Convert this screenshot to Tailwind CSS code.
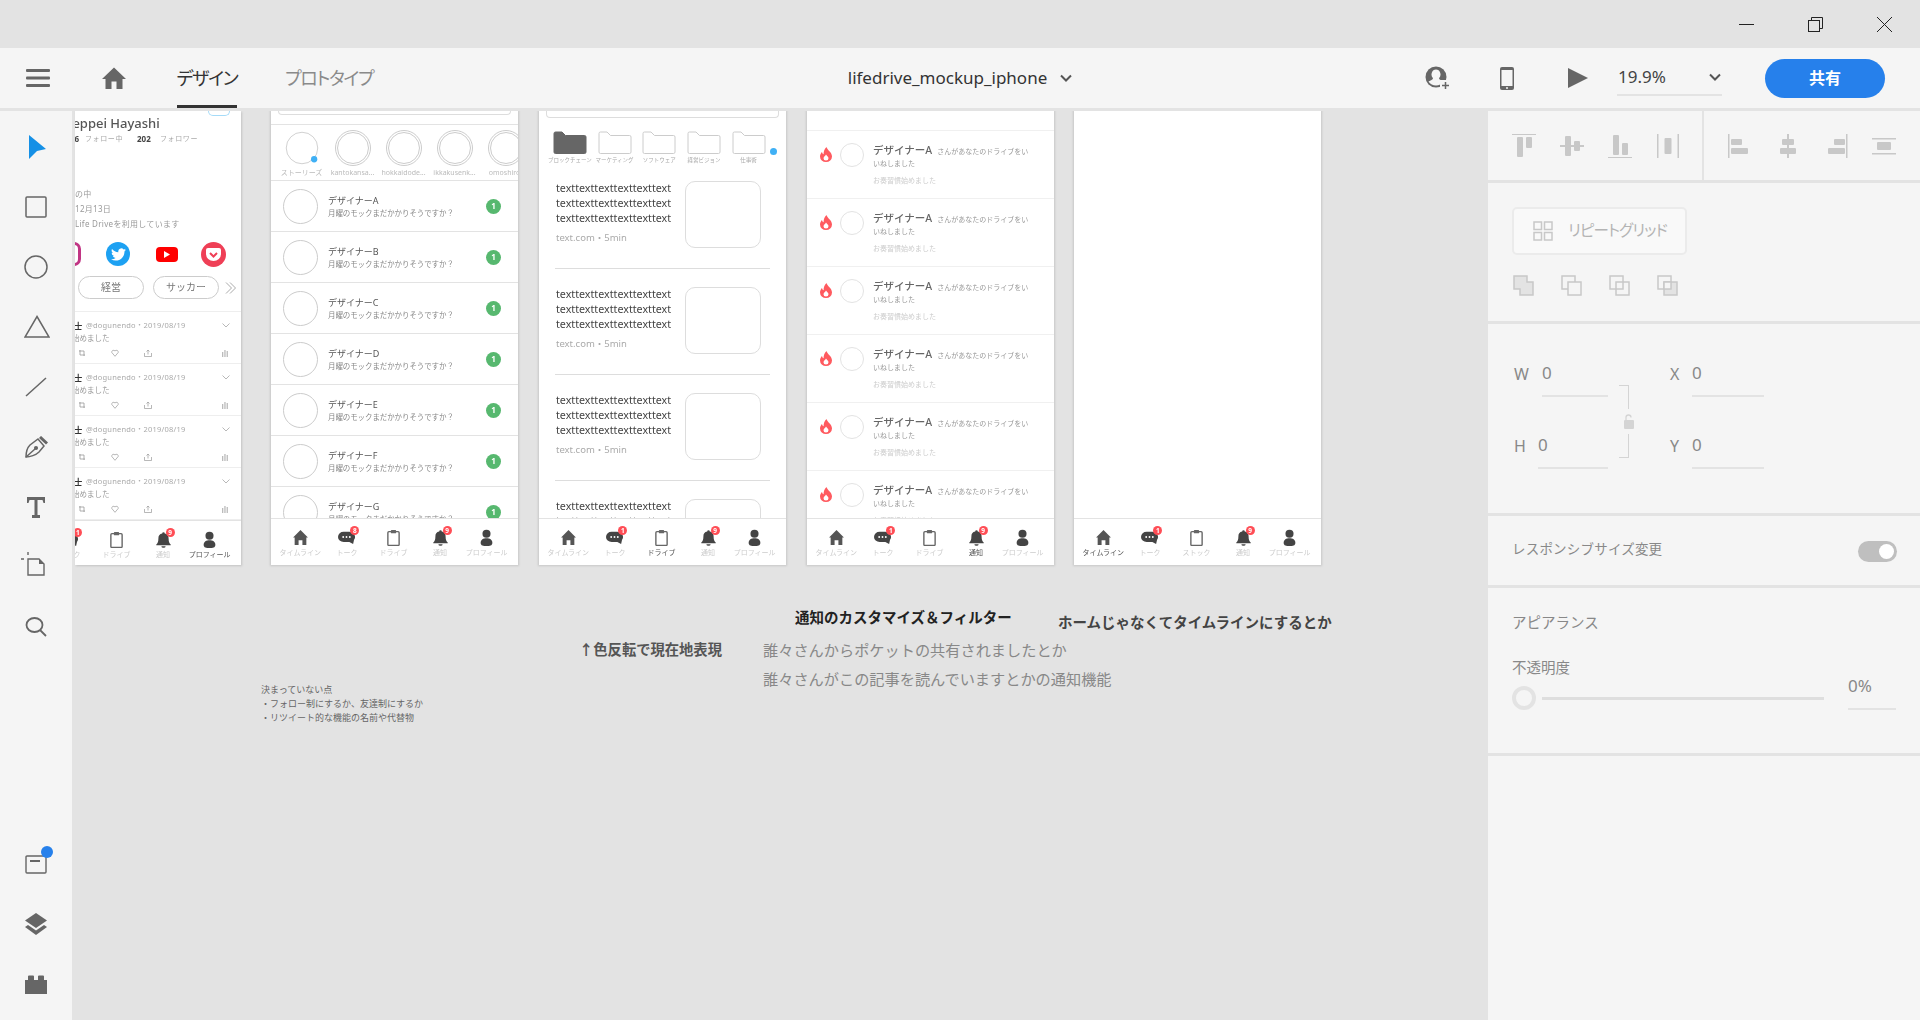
<!DOCTYPE html>
<html lang="ja">
<head>
<meta charset="UTF-8">
<title>lifedrive_mockup_iphone</title>
<script src="https://cdn.jsdelivr.net/npm/@tailwindcss/browser@4"></script>
</head>
<body class="w-[1920px] h-[1020px] overflow-hidden flex flex-col bg-[#e3e3e3] text-[#555] font-['Noto_Sans','Noto_Sans_CJK_JP',sans-serif]">

<!-- shared nav icons -->
<svg class="hidden">
  <symbol id="i-home" viewBox="0 0 16 16"><path fill="#555" d="M8 1 15 8 13.500 8 13.500 15 9.800 15 9.800 10.500 6.200 10.500 6.200 15 2.500 15 2.500 8 1 8Z"/></symbol>
  <symbol id="i-talk" viewBox="0 0 18 16"><path fill="#444" d="M6 2h6a6 5.500 0 0 1 5 8.500L16 15l-4-2.200H6A6 5.400 0 0 1 6 2Z"/><circle cx="5.500" cy="7.500" r="1" fill="#fff"/><circle cx="9" cy="7.500" r="1" fill="#fff"/><circle cx="12.500" cy="7.500" r="1" fill="#fff"/></symbol>
  <symbol id="i-clip" viewBox="0 0 16 16"><rect x="2.700" y="2.500" width="10.600" height="13" rx="1" fill="#fff" stroke="#666" stroke-width="1.300"/><rect x="5.500" y="1" width="5" height="3" rx=".8" fill="#666"/></symbol>
  <symbol id="i-bell" viewBox="0 0 16 16"><path fill="#444" d="M8 1.200a1.200 1.200 0 0 1 1.200 1.200A4.500 4.500 0 0 1 12.800 7c0 3.500 1 4.800 2 5.800v.7H1.200v-.7c1-1 2-2.300 2-5.800a4.500 4.500 0 0 1 3.600-4.600A1.200 1.200 0 0 1 8 1.200Z"/><path fill="#444" d="M6 14.300h4a2 1.500 0 0 1-4 0Z"/></symbol>
  <symbol id="i-user" viewBox="0 0 16 16"><circle cx="8" cy="4.500" r="3.800" fill="#444"/><path fill="#444" d="M2.500 13c0-3 2.500-4.300 5.500-4.300S13.500 10 13.500 13s-2.500 3-5.500 3-5.500 0-5.500-3Z"/></symbol>
  <symbol id="i-flame" viewBox="0 0 12 15"><path fill="#ff5a5f" d="M6.500 0C7 3 12 5 12 9.500a6 5.500 0 0 1-12 0C0 7.500 1 6 2 5c.2 1.300.8 2 1.600 2.200C3.500 4.500 4.500 2 6.500 0Z"/><path fill="#fff" d="M6 7.500c.4 1.200 2.500 2 2.500 3.800a2.500 2.300 0 0 1-5 0C3.500 9.500 5.500 9 6 7.500Z"/></symbol>
  <symbol id="i-folder" viewBox="0 0 34 23"><path d="M1 5V2.500A1.500 1.500 0 0 1 2.500 1h6.500l3.500 3.500h19A1.500 1.500 0 0 1 33 6v15a1.500 1.500 0 0 1-1.500 1.500h-29A1.500 1.500 0 0 1 1 21Z"/></symbol>
</svg>

<!-- title bar -->
<div class="h-12 shrink-0 flex items-center justify-end pr-[28px] gap-[54px]">
  <svg class="w-[15px] h-[15px]" viewBox="0 0 15 15"><path d="M0 7.500h15" stroke="#222" fill="none"/></svg>
  <svg class="w-[15px] h-[15px]" viewBox="0 0 15 15" fill="none" stroke="#222"><rect x=".5" y="3.500" width="11" height="11"/><path d="M3.500 3.500v-3h11v11h-3"/></svg>
  <svg class="w-[15px] h-[15px]" viewBox="0 0 15 15" fill="none" stroke="#222"><path d="M0 0l15 15M15 0 0 15"/></svg>
</div>

<!-- toolbar -->
<div class="h-[60px] shrink-0 bg-[#f5f5f5] grid grid-cols-[1fr_auto_1fr] items-center">
  <div class="flex items-center h-full">
    <svg class="ml-[26px] w-[24px] h-[18px]" viewBox="0 0 24 18" fill="#666"><rect width="24" height="3" rx="1"/><rect y="7.500" width="24" height="3" rx="1"/><rect y="15" width="24" height="3" rx="1"/></svg>
    <svg class="ml-[52px] w-[24px] h-[24px]" viewBox="0 0 24 24" fill="#666"><path d="M12 1.500 24 13h-3.500v10h-6v-7.500h-5V23h-6V13H0Z"/></svg>
    <div class="ml-[51px] h-full pt-[3px] flex items-center border-b-[3px] border-[#333] text-[#333] text-[18px] w-[60px] justify-center whitespace-nowrap [font-feature-settings:'palt'] tracking-[-1.300px]">デザイン</div>
    <div class="ml-[48px] text-[#8a8a8a] text-[18px] whitespace-nowrap [font-feature-settings:'palt'] tracking-[-1.300px]">プロトタイプ</div>
  </div>
  <div class="flex items-center text-[17px] text-[#333]">
    lifedrive_mockup_iphone
    <svg class="ml-[13px] w-[12px] h-[8px]" viewBox="0 0 12 8" fill="none" stroke="#555" stroke-width="2"><path d="M1 1.500l5 5 5-5"/></svg>
  </div>
  <div class="flex items-center justify-end pr-[35px]">
    <svg class="w-[26px] h-[24px]" viewBox="0 0 26 24"><circle cx="11" cy="11" r="10.500" fill="#666"/><path fill="#f5f5f5" d="M11 3.500a4.500 5 0 0 1 3 8.700c0 1.500 2.500 2 4.500 3.300a9 9 0 0 1-15 0c2-1.300 4.500-1.800 4.500-3.300a4.500 5 0 0 1 3-8.700Z"/><rect x="15" y="14" width="11" height="10" fill="#f5f5f5"/><path d="M20.500 16v7M17 19.500h7" stroke="#666" stroke-width="1.500"/></svg>
    <svg class="ml-[49px] w-[14px] h-[23px]" viewBox="0 0 14 23"><rect width="14" height="23" rx="2" fill="#666"/><rect x="1.500" y="3" width="11" height="16" fill="#f5f5f5"/><circle cx="7" cy="21" r="1" fill="#f5f5f5"/></svg>
    <svg class="ml-[54px] w-[20px] h-[20px]" viewBox="0 0 20 20" fill="#666"><path d="M0 0 20 10 0 20Z"/></svg>
    <div class="ml-[29px] w-[105px] h-[36px] flex items-center justify-between border-b-2 border-[#e3e3e3] text-[17px] text-[#444] pr-[1px]">
      <span class="pl-[1px]">19.9%</span>
      <svg class="w-[12px] h-[8px]" viewBox="0 0 12 8" fill="none" stroke="#555" stroke-width="2"><path d="M1 1.500l5 5 5-5"/></svg>
    </div>
    <div class="ml-[43px] w-[120px] h-[39px] rounded-full bg-[#2680eb] text-white font-bold text-[16px] flex items-center justify-center">共有</div>
  </div>
</div>

<!-- main -->
<div class="flex-1 min-h-0 flex mt-[3px]">

  <!-- tools rail -->
  <div class="w-[72px] shrink-0 bg-[#f5f5f5] relative">
    <svg class="absolute left-[29px] top-[24px] w-[17px] h-[24px]" viewBox="0 0 17 24"><path fill="#1590e6" d="M0 0 17 14 8 16 0 24Z"/></svg>
    <svg class="absolute left-[25px] top-[85px] w-[22px] h-[22px]" viewBox="0 0 22 22"><rect x="1" y="1" width="20" height="20" rx="1" fill="none" stroke="#666" stroke-width="1.500"/></svg>
    <svg class="absolute left-[24px] top-[144px] w-[24px] h-[24px]" viewBox="0 0 24 24"><circle cx="12" cy="12" r="11" fill="none" stroke="#666" stroke-width="1.500"/></svg>
    <svg class="absolute left-[24px] top-[204px] w-[26px] h-[23px]" viewBox="0 0 26 23"><path d="M13 1.500 25 22H1Z" fill="none" stroke="#666" stroke-width="1.500"/></svg>
    <svg class="absolute left-[25px] top-[266px] w-[22px] h-[20px]" viewBox="0 0 22 20"><path d="M1 19 21 1" stroke="#666" stroke-width="1.500"/></svg>
    <svg class="absolute left-[25px] top-[325px] w-[24px] h-[22px]" viewBox="0 0 24 22" fill="none" stroke="#666" stroke-width="1.500"><path d="M1 21c0-5 2-10 4-12l8-6 6 7-5 6c-3 3-9 5-13 5Z"/><path d="M1 21l9-8"/><circle cx="11" cy="12" r="1.300" fill="#666"/><path d="M15 1l7 6.500" stroke-width="3"/></svg>
    <svg class="absolute left-[27px] top-[386px] w-[18px] h-[21px]" viewBox="0 0 18 21" fill="#666"><path d="M0 0h18v6h-1.500l-1-3H10.500V18H13v3H5v-3h2.500V3H2.500l-1 3H0Z"/></svg>
    <svg class="absolute left-[21px] top-[441px] w-[24px] h-[24px]" viewBox="0 0 24 24" fill="none" stroke="#666" stroke-width="1.400"><path d="M7 7h11l5 5v11H7Z"/><path fill="#666" stroke="none" d="M18 7l5 5h-5Z"/><path d="M0 7h3M7 0v3"/></svg>
    <svg class="absolute left-[25px] top-[506px] w-[22px] h-[20px]" viewBox="0 0 22 20" fill="none" stroke="#666" stroke-width="1.800"><ellipse cx="9.500" cy="8" rx="8" ry="7"/><path d="M15 13l6 6"/></svg>
    <svg class="absolute left-[25px] top-[743px] w-[22px] h-[20px]" viewBox="0 0 22 20" fill="none" stroke="#666" stroke-width="1.400"><rect x="1" y="2" width="20" height="17" rx="1"/><path d="M5 7h10" stroke-width="2"/></svg>
    <div class="absolute left-[41px] top-[735px] w-[12px] h-[12px] rounded-full bg-[#2680eb]"></div>
    <svg class="absolute left-[25px] top-[802px] w-[22px] h-[22px]" viewBox="0 0 22 22" fill="#666"><path d="M11 0 22 7.500 11 15 0 7.500Z"/><path d="M3 12l8 5.500 8-5.500 3 2-11 8L0 14Z"/></svg>
    <svg class="absolute left-[25px] top-[864px] w-[22px] h-[19px]" viewBox="0 0 22 19" fill="#666"><path d="M0 5h3V1.500A1 1 0 0 1 4 .5h4a1 1 0 0 1 1 1V5h4V1.500a1 1 0 0 1 1-1h4a1 1 0 0 1 1 1V5h3v14H0Z"/></svg>
  </div>

  <!-- canvas -->
  <div class="flex-1 min-w-0 relative overflow-hidden pl-[3px]">
    <div class="flex items-start blur-[0.3px]">

      <!-- art 1, cut off by the rail -->
      <div class="w-[166px] h-[454px] overflow-hidden shrink-0 bg-white shadow-[1px_1px_2px_#c4c4c4]">
        <div class="w-[247px] h-[454px] ml-[-81px] flex flex-col">
          <div class="h-[5px] pl-[214px]"><div class="w-[22px] h-[5px] border border-t-0 border-[#a5dbf8] rounded-b-full"></div></div>
          <div class="h-[14px] leading-[14px] pl-[72px] text-[13px] font-medium text-[#555] whitespace-nowrap">Teppei Hayashi</div>
          <div class="flex h-[12px] mt-[3px] pl-[70px] items-center text-[7px] text-[#aaa] whitespace-nowrap">
            <span class="w-[15px] text-right font-bold text-[#444] text-[8px]">26</span>
            <span class="ml-[6px] w-[46px] tracking-[0.6px]">フォロー中</span>
            <span class="ml-[6px] w-[15px] font-bold text-[#444] text-[8px]">202</span>
            <span class="ml-[8px] tracking-[0.6px]">フォロワー</span>
          </div>
          <div class="mt-[41px] pl-[81px] text-[8px] leading-[15px] text-[#999] tracking-[0.3px] whitespace-nowrap">
            <div>の中</div>
            <div>12月13日</div>
            <div>Life Driveを利用しています</div>
          </div>
          <div class="mt-[11px] h-[24px] flex items-center whitespace-nowrap">
            <div class="ml-[63px] w-[24px] h-[24px] rounded-[7px] border-[3px] border-[#c13584]"></div>
            <div class="ml-[25px] w-[24px] h-[24px] rounded-full bg-[#1da1f2] flex items-center justify-center">
              <svg class="w-[15px] h-[15px]" viewBox="0 0 24 24" fill="#fff"><path d="M23.953 4.57a10 10 0 01-2.825.775 4.958 4.958 0 002.163-2.723c-.951.555-2.005.959-3.127 1.184a4.92 4.92 0 00-8.384 4.482C7.69 8.095 4.067 6.13 1.64 3.162a4.822 4.822 0 00-.666 2.475c0 1.71.87 3.213 2.188 4.096a4.904 4.904 0 01-2.228-.616v.06a4.923 4.923 0 003.946 4.827 4.996 4.996 0 01-2.212.085 4.936 4.936 0 004.604 3.417 9.867 9.867 0 01-6.102 2.105c-.39 0-.779-.023-1.17-.067a13.995 13.995 0 007.557 2.209c9.053 0 13.998-7.496 13.998-13.985 0-.21 0-.42-.015-.63A9.935 9.935 0 0024 4.59z"/></svg>
            </div>
            <div class="ml-[26px] w-[22px] h-[15px] rounded-[4px] bg-[#f00] flex items-center justify-center">
              <svg class="w-[6px] h-[7px]" viewBox="0 0 6 7" fill="#fff"><path d="M0 0 6 3.500 0 7Z"/></svg>
            </div>
            <div class="ml-[23px] w-[25px] h-[25px] rounded-full bg-[#ef3f56] flex items-center justify-center">
              <svg class="w-[15px] h-[13px]" viewBox="0 0 15 13"><path fill="#fff" d="M2 0h11a2 2 0 0 1 2 2v4a7.500 7 0 0 1-15 0V2a2 2 0 0 1 2-2Z"/><path d="M4 5l3.500 3.500L11 5" fill="none" stroke="#ef3f56" stroke-width="2"/></svg>
            </div>
          </div>
          <div class="mt-[10px] flex items-center text-[10px] text-[#777] h-[23px]">
            <div class="ml-[84px] w-[66px] h-[23px] rounded-full border border-[#ccc] flex items-center justify-center">経営</div>
            <div class="ml-[9px] w-[66px] h-[23px] rounded-full border border-[#ccc] flex items-center justify-center">サッカー</div>
            <svg class="ml-[6px] w-[12px] h-[12px]" viewBox="0 0 12 12" fill="none" stroke="#aaa"><path d="M1 .5 6.500 6 1 11.500M5 .5 10.500 6 5 11.500"/></svg>
          </div>
          <div id="tweets" class="mt-[12px] border-t border-[#eee]"></div>
          <div class="mt-auto" data-nav="タイムライン,トーク,ドライブ,通知,プロフィール" data-active="4"></div>
        </div>
      </div>

      <!-- art 2 -->
      <div class="ml-[30px] w-[247px] h-[454px] shrink-0 bg-white overflow-hidden shadow-[0_0_2px_1px_#c8c8c8] flex flex-col">
        <div class="h-[14px] shrink-0 border-b border-[#e3e3e3] px-[7px]"><div class="h-[4px] border border-t-0 border-[#ddd] rounded-b-[4px]"></div></div>
        <div id="stories" class="h-[56px] shrink-0 border-b border-[#e3e3e3] flex pl-[5px] pt-[5px] overflow-hidden text-[7px] text-[#bbb] whitespace-nowrap"></div>
        <div id="chats" class="flex-1 min-h-0 overflow-hidden"></div>
        <div data-nav="タイムライン,トーク,ドライブ,通知,プロフィール" data-active="-1" data-talk="8"></div>
      </div>

      <!-- art 3 -->
      <div class="ml-[21px] w-[247px] h-[454px] shrink-0 bg-white overflow-hidden shadow-[0_0_2px_1px_#c8c8c8] flex flex-col">
        <div class="h-[7px] shrink-0 mx-[7px] border border-t-0 border-[#ddd] rounded-b-[4px]"></div>
        <div id="folders" class="h-[45px] shrink-0 flex items-start pt-[13px] pl-[8.500px] relative"></div>
        <div id="stock" class="flex-1 min-h-0 overflow-hidden"></div>
        <div data-nav="タイムライン,トーク,ドライブ,通知,プロフィール" data-active="2"></div>
      </div>

      <!-- art 4 -->
      <div class="ml-[21px] w-[247px] h-[454px] shrink-0 bg-white overflow-hidden shadow-[0_0_2px_1px_#c8c8c8] flex flex-col">
        <div class="h-[20px] shrink-0 border-b border-[#f0f0f0]"></div>
        <div id="notices" class="flex-1 min-h-0 overflow-hidden"></div>
        <div data-nav="タイムライン,トーク,ドライブ,通知,プロフィール" data-active="3"></div>
      </div>

      <!-- art 5 -->
      <div class="ml-[20px] w-[247px] h-[454px] shrink-0 bg-white overflow-hidden shadow-[0_0_2px_1px_#c8c8c8] flex flex-col">
        <div class="flex-1"></div>
        <div data-nav="タイムライン,トーク,ストック,通知,プロフィール" data-active="0"></div>
      </div>
    </div>

    <!-- sticky notes on the canvas -->
    <div class="absolute left-[723px] top-[495px] text-[14.500px] leading-[22px] font-bold text-[#222] whitespace-nowrap">通知のカスタマイズ＆フィルター</div>
    <div class="absolute left-[986px] top-[500px] text-[14.500px] leading-[22px] font-bold text-[#444] whitespace-nowrap">ホームじゃなくてタイムラインにするとか</div>
    <div class="absolute left-[507px] top-[528px] text-[14.300px] leading-[22px] font-bold text-[#555] whitespace-nowrap">↑色反転で現在地表現</div>
    <div class="absolute left-[691px] top-[524.500px] text-[15.200px] leading-[29px] text-[#888] whitespace-nowrap">
      <div>誰々さんからポケットの共有されましたとか</div>
      <div>誰々さんがこの記事を読んでいますとかの通知機能</div>
    </div>
    <div class="absolute left-[189px] top-[572px] text-[9px] leading-[14px] text-[#666] whitespace-nowrap">
      <div>決まっていない点</div>
      <div>・フォロー制にするか、友達制にするか</div>
      <div>・リツイート的な機能の名前や代替物</div>
    </div>
  </div>

  <!-- property panel -->
  <div class="w-[432px] shrink-0 bg-[#f5f5f5] flex flex-col text-[#888]">
    <div class="h-[72px] shrink-0 flex border-b-[3px] border-[#e3e3e3]">
      <div class="w-[216px] flex items-center pl-[24px] gap-[24px] border-r-2 border-[#e3e3e3]">
        <svg class="w-[24px] h-[24px]" viewBox="0 0 24 24" fill="#c8c8c8"><rect y="0" width="24" height="1"/><rect x="5" y="3" width="6" height="20" rx="1"/><rect x="14" y="3" width="6" height="11" rx="1"/></svg>
        <svg class="w-[24px] h-[24px]" viewBox="0 0 24 24" fill="#c8c8c8"><rect y="11" width="24" height="2"/><rect x="5" y="2" width="6" height="20" rx="1"/><rect x="14" y="7" width="6" height="10" rx="1"/></svg>
        <svg class="w-[24px] h-[24px]" viewBox="0 0 24 24" fill="#c8c8c8"><rect y="23" width="24" height="1"/><rect x="5" y="1" width="6" height="20" rx="1"/><rect x="14" y="9" width="6" height="12" rx="1"/></svg>
        <svg class="w-[24px] h-[24px]" viewBox="0 0 24 24" fill="#c8c8c8"><rect x="1" width="1.500" height="24"/><rect x="21.500" width="1.500" height="24"/><rect x="8.500" y="4" width="7" height="16" rx="1"/></svg>
      </div>
      <div class="flex items-center pl-[24px] gap-[24px]">
        <svg class="w-[24px] h-[24px]" viewBox="0 0 24 24" fill="#c8c8c8"><rect width="1.500" height="24"/><rect x="3" y="5" width="11" height="6" rx="1"/><rect x="3" y="14" width="17" height="6" rx="1"/></svg>
        <svg class="w-[24px] h-[24px]" viewBox="0 0 24 24" fill="#c8c8c8"><rect x="11" width="2" height="24"/><rect x="6" y="5" width="12" height="6" rx="1"/><rect x="4" y="14" width="16" height="6" rx="1"/></svg>
        <svg class="w-[24px] h-[24px]" viewBox="0 0 24 24" fill="#c8c8c8"><rect x="22" width="1.500" height="24"/><rect x="10" y="5" width="11" height="6" rx="1"/><rect x="4" y="14" width="17" height="6" rx="1"/></svg>
        <svg class="w-[24px] h-[24px]" viewBox="0 0 24 24" fill="#c8c8c8"><rect y="4" width="24" height="1.500"/><rect y="19" width="24" height="1.500"/><rect x="5" y="8" width="14" height="8" rx="1"/></svg>
      </div>
    </div>

    <div class="h-[141px] shrink-0 border-b-[3px] border-[#e3e3e3] pl-[24px] pt-[24px]">
      <div class="w-[175px] h-[48px] rounded-[5px] border-2 border-[#ebebeb] bg-[#f9f9f9] flex items-center pl-[19px] text-[15.500px] tracking-[-0.8px] text-[#b4b4b4] whitespace-nowrap [font-feature-settings:'palt']">
        <svg class="w-[20px] h-[20px] mr-[15px]" viewBox="0 0 20 20" fill="none" stroke="#c8c8c8" stroke-width="1.500"><rect x="1" y="1" width="7.500" height="7.500"/><rect x="11.500" y="1" width="7.500" height="7.500"/><rect x="1" y="11.500" width="7.500" height="7.500"/><rect x="11.500" y="11.500" width="7.500" height="7.500"/></svg>
        リピートグリッド
      </div>
      <div class="flex gap-[27px] mt-[20px] ml-[1px]">
        <svg class="w-[21px] h-[21px]" viewBox="0 0 21 21" fill="#e3e3e3" stroke="#c8c8c8" stroke-width="1.500"><path d="M1 1h13v6h6v13H7v-6H1Z"/></svg>
        <svg class="w-[21px] h-[21px]" viewBox="0 0 21 21" fill="none" stroke="#c8c8c8" stroke-width="1.500"><path d="M7 14H1V1h13v6"/><rect x="7" y="7" width="13" height="13" fill="#f5f5f5"/></svg>
        <svg class="w-[21px] h-[21px]" viewBox="0 0 21 21" fill="none" stroke="#c8c8c8" stroke-width="1.500"><rect x="1" y="1" width="13" height="13"/><rect x="7" y="7" width="13" height="13"/></svg>
        <svg class="w-[21px] h-[21px]" viewBox="0 0 21 21" fill="none" stroke="#c8c8c8" stroke-width="1.500"><rect x="1" y="1" width="13" height="13"/><rect x="7" y="7" width="13" height="13" fill="#e3e3e3"/><rect x="7" y="7" width="7" height="7" fill="#f5f5f5"/></svg>
      </div>
    </div>

    <div class="h-[192px] shrink-0 border-b-[3px] border-[#e3e3e3] relative pl-[26px] pt-[38px] text-[16px]">
      <div class="flex h-[38px] items-start">
        <span class="w-[28px]">W</span>
        <div class="w-[66px] h-[38px] border-b-2 border-[#e3e3e3] text-[17px] leading-[28px] mt-[-3px]">0</div>
        <span class="ml-[62px] w-[22px]">X</span>
        <div class="w-[72px] h-[38px] border-b-2 border-[#e3e3e3] text-[17px] leading-[28px] mt-[-3px]">0</div>
      </div>
      <div class="flex h-[38px] items-start mt-[34px]">
        <span class="w-[24px]">H</span>
        <div class="w-[70px] h-[38px] border-b-2 border-[#e3e3e3] text-[17px] leading-[28px] mt-[-3px]">0</div>
        <span class="ml-[62px] w-[22px]">Y</span>
        <div class="w-[72px] h-[38px] border-b-2 border-[#e3e3e3] text-[17px] leading-[28px] mt-[-3px]">0</div>
      </div>
      <div class="absolute left-[131px] top-[61px] w-[10px] h-[24px] border-t border-r border-[#d4d4d4]"></div>
      <div class="absolute left-[131px] top-[110px] w-[10px] h-[24px] border-b border-r border-[#d4d4d4]"></div>
      <svg class="absolute left-[136px] top-[90px] w-[10px] h-[15px]" viewBox="0 0 10 15" fill="#d4d4d4"><rect y="6" width="10" height="9" rx="1"/><path d="M2 6V3.500a2.500 2.500 0 0 1 5 0" fill="none" stroke="#d4d4d4" stroke-width="1.300"/></svg>
    </div>

    <div class="h-[72px] shrink-0 border-b-[3px] border-[#e3e3e3] flex items-center justify-between pl-[24px] pr-[23px] pb-[2px] text-[13.500px] text-[#888] whitespace-nowrap">
      <span class="tracking-[0.2px]">レスポンシブサイズ変更</span>
      <div class="w-[39px] h-[21px] rounded-full bg-[#bfbfbf] flex items-center justify-end pr-[3px] mt-[3px]"><div class="w-[15px] h-[15px] rounded-full bg-white"></div></div>
    </div>

    <div class="h-[168px] shrink-0 border-b-[3px] border-[#e3e3e3] pl-[24px] pt-[22px] pr-[24px] text-[14.500px]">
      <div class="leading-[24px]">アピアランス</div>
      <div class="leading-[24px] mt-[21px]">不透明度</div>
      <div class="flex items-center mt-[7px]">
        <div class="w-[24px] h-[24px] rounded-full border-4 border-[#e3e3e3] shrink-0"></div>
        <div class="w-[282px] h-[3px] bg-[#dedede] ml-[6px]"></div>
        <div class="ml-[24px] w-[48px] h-[37px] border-b-2 border-[#e3e3e3] text-[17px] leading-[26px] mt-[-14px]">0%</div>
      </div>
    </div>
  </div>
</div>

<script>
  // mock content is the same row over and over, so stamp it out
  const navIcons = ['i-home', 'i-talk', 'i-clip', 'i-bell', 'i-user'];
  document.querySelectorAll('[data-nav]').forEach(el => {
    const active = Number(el.dataset.active);
    const items = el.dataset.nav.split(',').map((label, i) => {
      const badge = i === 1 ? (el.dataset.talk || '1') : i === 3 ? '9' : '';
      return `<div class="relative flex flex-col items-center">
        <div class="relative w-[17px] h-[17px]"><svg class="w-[17px] h-[17px]"><use href="#${navIcons[i]}"/></svg>
        ${badge ? `<span class="absolute ${i === 1 ? 'right-[-4px]' : 'right-[-3px]'} top-[-3px] w-[9px] h-[9px] rounded-full bg-[#ff4d55] text-white text-[6.500px] leading-[9px] text-center font-bold">${badge}</span>` : ''}</div>
        <div class="mt-[2px] text-[7px] leading-[10px] whitespace-nowrap ${i === active ? 'text-[#555]' : 'text-[#ccc]'}">${label}</div>
      </div>`;
    }).join('');
    el.className = (el.className + ' shrink-0 h-[47px] border-t border-[#e3e3e3] bg-white grid grid-cols-5 pl-[6px] pr-[8px] pt-[10px]').trim();
    el.innerHTML = items;
  });

  document.getElementById('tweets').innerHTML = Array(4).fill(`
    <div class="h-[52px] border-b-[1.5px] border-[#eee] pl-[72px] pr-[11px] pt-[7px]">
      <div class="flex items-center h-[13px] text-[7.500px] text-[#aaa] tracking-[0.2px] whitespace-nowrap">
        <span class="w-[20px] font-bold text-[#333] text-[8px]">博士</span>
        <span>@dogunendo・2019/08/19</span>
        <svg class="ml-auto w-[8px] h-[5px]" viewBox="0 0 8 5" fill="none" stroke="#999" stroke-width=".7"><path d="M.5.5 4 4 7.500.5"/></svg>
      </div>
      <div class="h-[13px] leading-[13px] text-[7.500px] text-[#999] pl-[9px] whitespace-nowrap -ml-[3px]">始めました</div>
      <div class="relative h-[10px] mt-[4px] text-[#aaa]">
        <svg class="absolute left-[12px] top-0 w-[8px] h-[8px]" viewBox="0 0 8 8" fill="none" stroke="#999" stroke-width=".8"><path d="M1 2h5v5M7 6H2V1"/></svg>
        <svg class="absolute left-[45px] top-0 w-[8px] h-[8px]" viewBox="0 0 8 8" fill="none" stroke="#999" stroke-width=".7"><path d="M4 7.300.8 3.500a1.800 1.800 0 0 1 3.200-1.500 1.800 1.800 0 0 1 3.200 1.500Z"/></svg>
        <svg class="absolute left-[78px] top-0 w-[8px] h-[8px]" viewBox="0 0 8 8" fill="none" stroke="#999" stroke-width=".7"><path d="M.5 4v3.500h7V4M4 5.500V1M2.500 2.500 4 1l1.500 1.500"/></svg>
        <svg class="absolute right-[2px] top-0 w-[6px] h-[8px]" viewBox="0 0 6 8" fill="#bbb"><rect x="0" y="3" width="1.300" height="5"/><rect x="2.300" y="1" width="1.300" height="7"/><rect x="4.600" y="2" width="1.300" height="6"/></svg>
      </div>
    </div>`).join('');

  document.getElementById('stories').innerHTML = ['ストーリーズ', 'kantokansa...', 'hokkaidode...', 'ikkakusenk...', 'omoshiroi'].map((name, i) => `
    <div class="w-[51px] shrink-0 flex flex-col items-center">
      <div class="relative w-[36px] h-[36px] rounded-full ${i === 0 ? 'border border-[#ccc] scale-90' : 'border-[3px] border-double border-[#ccc]'}">
        ${i === 0 ? '<span class="absolute right-[0px] bottom-[1px] w-[7px] h-[7px] rounded-full bg-[#3fb0f5]"></span>' : ''}
      </div>
      <div class="mt-[2px] leading-[10px]">${name}</div>
    </div>`).join('');

  document.getElementById('chats').innerHTML = 'ABCDEFG'.split('').map(c => `
    <div class="h-[51px] border-b border-[#e3e3e3] flex items-center pl-[12px] pr-[17px]">
      <div class="w-[35px] h-[35px] rounded-full border border-[#ccc] shrink-0"></div>
      <div class="ml-[10px] flex-1 whitespace-nowrap">
        <div class="text-[9px] leading-[13px] text-[#555]">デザイナー${c}</div>
        <div class="text-[7.500px] leading-[12px] text-[#888] tracking-[-0.1px]">月曜のモックまだかかりそうですか？</div>
      </div>
      <div class="w-[15px] h-[15px] rounded-full bg-[#57b86f] text-white text-[8px] font-bold flex items-center justify-center shrink-0">1</div>
    </div>`).join('');

  document.getElementById('folders').innerHTML = ['ブロックチェーン', 'マーケティング', 'ソフトウェア', '経営ビジョン', '仕事術'].map((name, i) => `
    <div class="w-[44.700px] shrink-0 flex flex-col items-center">
      <svg class="w-[34px] h-[23px]" style="fill:${i === 0 ? '#666' : '#fff'};stroke:${i === 0 ? '#666' : '#ccc'}"><use href="#i-folder"/></svg>
      <div class="mt-[2px] text-[5.500px] leading-[8px] whitespace-nowrap text-[#aaa]">${name}</div>
    </div>`).join('') + '<span class="absolute left-[231px] top-[30px] w-[7px] h-[7px] rounded-full bg-[#3fb0f5]"></span>';

  document.getElementById('stock').innerHTML = Array(4).fill(`
    <div class="mx-[16px] pt-[18px] pb-[20px] h-[106px] border-b-[1.5px] border-[#ddd] flex justify-between">
      <div class="pl-[1px] text-[10.700px] leading-[15px] text-[#444]">
        <div>texttexttexttexttexttext</div>
        <div>texttexttexttexttexttext</div>
        <div>texttexttexttexttexttext</div>
        <div class="mt-[4px] text-[#aaa] text-[9.500px]">text.com・5min</div>
      </div>
      <div class="w-[76px] h-[67px] rounded-[10px] border border-[#ddd] mr-[9px] shrink-0"></div>
    </div>`).join('');

  document.getElementById('notices').innerHTML = Array(6).fill(`
    <div class="h-[68px] border-b-[1.500px] border-[#f0f0f0] flex pl-[13px] pt-[12px]">
      <svg class="w-[12px] h-[15px] mt-[4px]"><use href="#i-flame"/></svg>
      <div class="ml-[8px] w-[24px] h-[24px] rounded-full border border-[#e3e3e3] shrink-0"></div>
      <div class="ml-[9px] text-[7px] text-[#999] whitespace-nowrap">
        <div class="h-[14px] leading-[14px]"><span class="text-[10.500px] font-medium text-[#666] mr-[5px]">デザイナーA</span>さんがあなたのドライブをい</div>
        <div class="h-[13px] leading-[13px]">いねしました</div>
        <div class="h-[13px] leading-[13px] mt-[4px] text-[#ccc]">お奏習慣始めました</div>
      </div>
    </div>`).join('');
</script>
</body>
</html>
